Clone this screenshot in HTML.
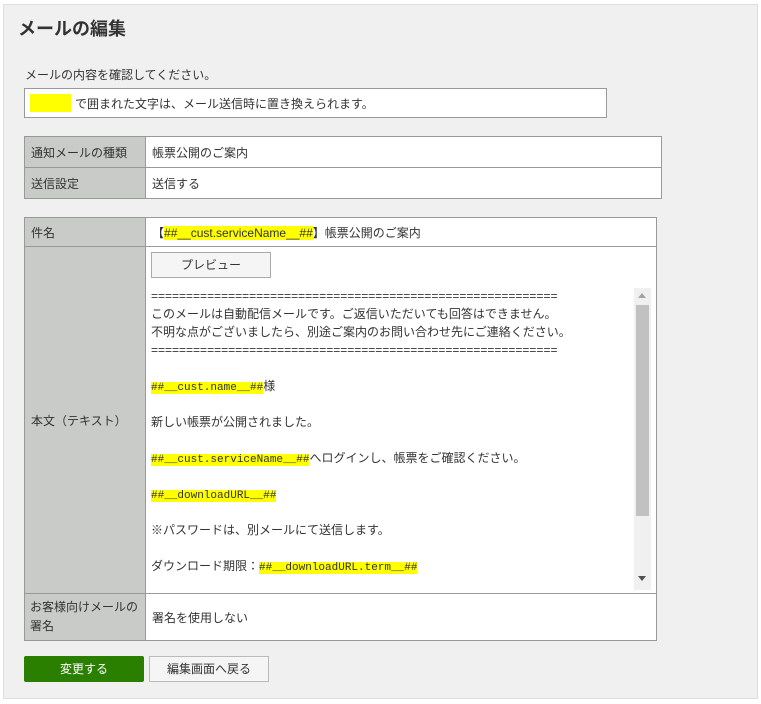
<!DOCTYPE html>
<html><head><meta charset="utf-8"><style>
*{box-sizing:border-box;margin:0;padding:0}
body{width:761px;height:704px;background:#fff;font-family:"Liberation Sans","Noto Sans CJK JP",sans-serif;font-size:12px;color:#333;position:relative;overflow:hidden}
.panel{position:absolute;left:3px;top:4px;width:755px;height:695px;background:#eff0ef;border:1px solid #ddd}
.a{position:absolute}
h1{position:absolute;left:18px;top:15px;font-size:18px;font-weight:bold;color:#333}
.hl{background:#ff0}
table{position:absolute;border-collapse:collapse;background:#fff}
td{border:1px solid #999;padding:0 6px;font-size:12px;color:#333}
td.l{background:#c8cbc8}
.btn{position:absolute;text-align:center;font-size:12px;line-height:24px}
.ta{position:absolute;left:150px;top:287px;width:484px;height:303px;background:#fff;font-size:12px;color:#333;overflow:hidden;padding-left:1px}
.ta div{height:18px;line-height:18px;white-space:nowrap}
.m{font-family:"Liberation Mono","Noto Sans CJK JP",monospace;font-size:11px}
</style></head><body>
<div class="panel"></div>
<h1>メールの編集</h1>
<div class="a" style="left:25px;top:66px;">メールの内容を確認してください。</div>
<div class="a" style="left:24px;top:88px;width:583px;height:30px;background:#fff;border:1px solid #999;">
 <span class="a" style="left:5px;top:5px;width:41px;height:18px;background:#ff0"></span>
 <span class="a" style="left:50px;top:6px;">で囲まれた文字は、メール送信時に置き換えられます。</span>
</div>
<table style="left:24px;top:136px;width:638px;">
<tr style="height:31px"><td class="l" style="width:121px">通知メールの種類</td><td>帳票公開のご案内</td></tr>
<tr style="height:31px"><td class="l">送信設定</td><td>送信する</td></tr>
</table>
<table style="left:24px;top:217px;width:633px;">
<tr style="height:29px"><td class="l" style="width:121px">件名</td><td>【<span class="hl">##__cust.serviceName__##</span>】帳票公開のご案内</td></tr>
<tr style="height:347px"><td class="l">本文（テキスト）</td><td></td></tr>
<tr style="height:47px"><td class="l" style="line-height:19px;padding-left:5px">お客様向けメールの<br>署名</td><td>署名を使用しない</td></tr>
</table>
<div class="btn" style="left:151px;top:252px;width:120px;height:26px;background:#f4f5f4;border:1px solid #aaa;color:#333">プレビュー</div>
<div class="ta">
<div>==========================================================</div>
<div>このメールは自動配信メールです。ご返信いただいても回答はできません。</div>
<div>不明な点がございましたら、別途ご案内のお問い合わせ先にご連絡ください。</div>
<div>==========================================================</div>
<div></div>
<div><span class="hl m">##__cust.name__##</span>様</div>
<div></div>
<div>新しい帳票が公開されました。</div>
<div></div>
<div><span class="hl m">##__cust.serviceName__##</span>へログインし、帳票をご確認ください。</div>
<div></div>
<div><span class="hl m">##__downloadURL__##</span></div>
<div></div>
<div>※パスワードは、別メールにて送信します。</div>
<div></div>
<div>ダウンロード期限：<span class="hl m">##__downloadURL.term__##</span></div>
</div>
<div class="a" style="left:634px;top:288px;width:17px;height:302px;background:#f0f0f0"></div>
<div class="a" style="left:636px;top:305px;width:13px;height:211px;background:#c1c1c1"></div>
<div class="a" style="left:638px;top:293px;width:0;height:0;border-left:4px solid transparent;border-right:4px solid transparent;border-bottom:5px solid #a3a3a3"></div>
<div class="a" style="left:638px;top:576px;width:0;height:0;border-left:4px solid transparent;border-right:4px solid transparent;border-top:5px solid #505050"></div>
<div class="btn" style="left:24px;top:656px;width:120px;height:26px;background:#2a7f00;color:#fff;border-radius:2px;line-height:26px">変更する</div>
<div class="btn" style="left:149px;top:656px;width:120px;height:26px;background:#f4f5f4;border:1px solid #bbb;color:#333">編集画面へ戻る</div>
</body></html>
